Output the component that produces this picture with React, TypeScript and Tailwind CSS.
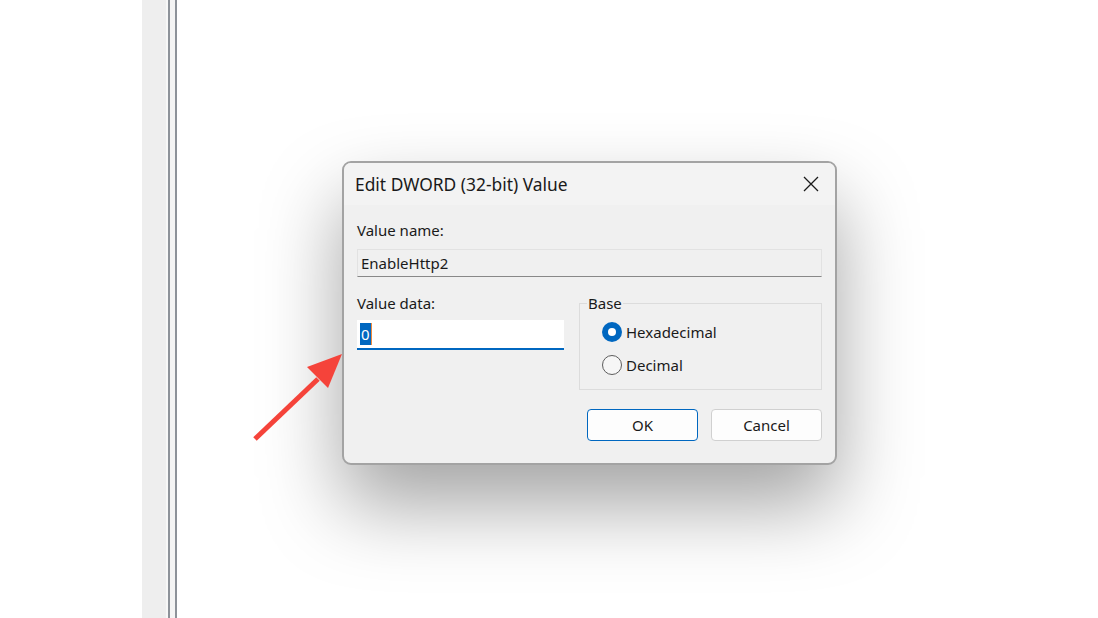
import * as React from "react";

const font = { fontFamily: '"Noto Sans", "Open Sans", sans-serif' };

function RadioRow({ label, checked }: { label: string; checked?: boolean }) {
  return (
    <div className="flex h-[24px] items-center">
      {checked ? (
        <span className="flex h-[20px] w-[20px] items-center justify-center rounded-full bg-[#0067c0]">
          <span className="h-[8px] w-[8px] rounded-full bg-white" />
        </span>
      ) : (
        <span className="h-[20px] w-[20px] rounded-full border border-[#5d5d5d] bg-[#f6f6f6]" />
      )}
      <span className="ml-[4px] text-[15px] leading-[20px] text-[#1a1a1a]">{label}</span>
    </div>
  );
}

function Arrow() {
  return (
    <svg
      className="pointer-events-none absolute left-0 top-0"
      width="1098"
      height="618"
      viewBox="0 0 1098 618"
    >
      <line x1="255" y1="439" x2="318" y2="379" stroke="#f5433a" strokeWidth="5" strokeLinecap="butt" />
      <polygon points="342,354 307,367 328,388" fill="#f5433a" />
    </svg>
  );
}

export default function App() {
  return (
    <div className="relative h-[618px] w-[1098px] overflow-hidden bg-white" style={font}>
      {/* background explorer edge */}
      <div className="flex h-full">
        <div className="w-[142px]" />
        <div className="w-[24px] bg-[#eeeeee]" />
        <div className="w-[2px] bg-[#f7f7f7]" />
        <div className="w-[2px] bg-[#8d9299]" />
        <div className="w-[5px] bg-[#f4f4f4]" />
        <div className="w-[2px] bg-[#8d9299]" />
        <div className="flex-1 bg-white" />
      </div>

      {/* dialog */}
      <div className="absolute left-[342px] top-[161px] flex w-[495px] flex-col overflow-hidden rounded-[9px] border-2 border-[#a3a3a3] bg-[#f0f0f0] shadow-[0_40px_80px_rgba(0,0,0,0.36)]">
        <div className="flex h-[42px] items-center justify-between bg-[#f3f3f3] pl-[11px] pr-[14px]">
          <span className="text-[17.4px] text-[#1a1a1a]">Edit DWORD (32-bit) Value</span>
          <svg width="16" height="16" viewBox="0 0 16 16" className="mr-[2px]">
            <path d="M1 1 L15 15 M15 1 L1 15" stroke="#1a1a1a" strokeWidth="1.3" />
          </svg>
        </div>

        <div className="flex flex-col px-[13px] pb-[22px] pt-[15px]">
          <div className="text-[15px] leading-[20px] text-[#1a1a1a]">Value name:</div>
          <div className="mt-[9px] flex h-[28px] items-center border border-b-[#888888] border-l-[#e2e2e2] border-r-[#e2e2e2] border-t-[#e2e2e2] bg-[#f0f0f0] pl-[3px] text-[15px] text-[#1a1a1a]">
            EnableHttp2
          </div>

          <div className="mt-[16px] flex">
            <div className="flex w-[207px] flex-col">
              <div className="text-[15px] leading-[20px] text-[#1a1a1a]">Value data:</div>
              <div className="mt-[7px] flex h-[30px] items-center border-b-2 border-[#0067c0] bg-white pl-[3px]">
                <span className="bg-[#0067c0] px-[1px] text-[15px] leading-[22px] text-white">0</span>
                <span className="h-[22px] w-[1px] bg-[#f08a3c]" />
              </div>
            </div>
            <fieldset className="ml-[15px] h-[97px] flex-1 border border-[#dcdcdc]">
              <legend className="ml-[7px] px-[1px] text-[15px] leading-[20px] text-[#1a1a1a]">Base</legend>
              <div className="flex flex-col pl-[22px] pt-[7px]">
                <RadioRow label="Hexadecimal" checked />
                <div className="mt-[9px]">
                  <RadioRow label="Decimal" />
                </div>
              </div>
            </fieldset>
          </div>

          <div className="mt-[19px] flex justify-end gap-[13px]">
            <button className="h-[32px] w-[111px] rounded-[4px] border border-[#0067c0] bg-[#fdfdfd] text-[15px] text-[#1a1a1a]">
              OK
            </button>
            <button className="h-[32px] w-[111px] rounded-[4px] border border-[#d0d0d0] bg-[#fdfdfd] text-[15px] text-[#1a1a1a]">
              Cancel
            </button>
          </div>
        </div>
      </div>

      <Arrow />
    </div>
  );
}
